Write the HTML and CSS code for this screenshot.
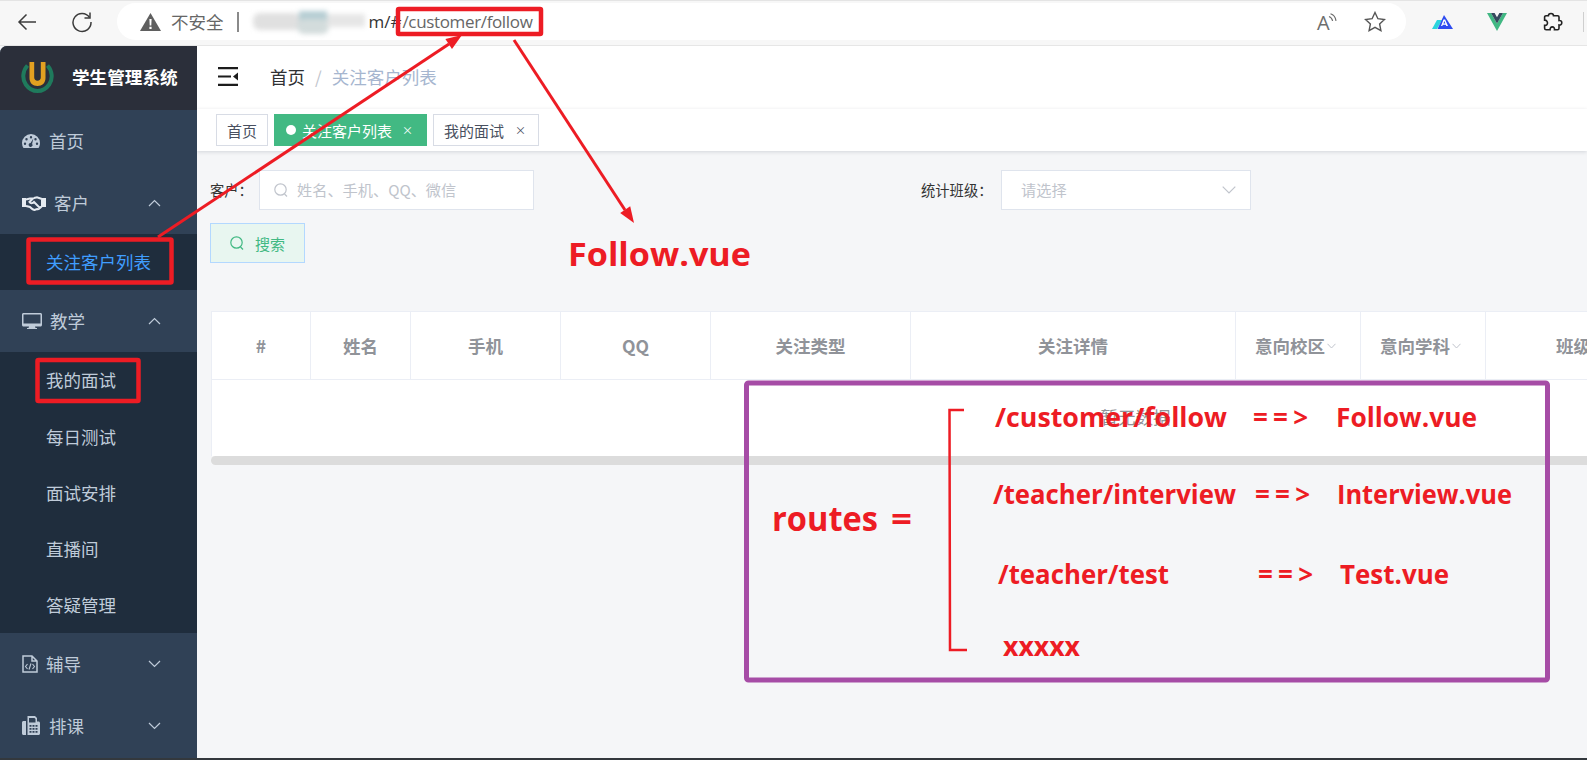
FILE: index.html
```html
<!DOCTYPE html>
<html lang="zh-CN">
<head>
<meta charset="utf-8">
<title>学生管理系统</title>
<link rel="stylesheet" href="styles.css">
</head>
<body>
<div class="page">
  <header class="toolbar">
    <svg class="tb-back" viewBox="0 0 20 18"><path d="M19 9H2M9.5 1.5 2 9l7.5 7.5"/></svg>
    <svg class="tb-reload" viewBox="0 0 22 22"><path d="M18.5 6.5A9 9 0 1 0 20 11"/><path d="M19 1.5v5.5h-5.5"/></svg>
    <div class="pill">
      <svg class="warn" viewBox="0 0 21 18"><path class="warn-tri" d="M10.5 0 21 18H0z"/><path class="warn-mark" d="M9.4 6h2.2l-.3 6.5H9.700zM9.400 13.800h2.200V16H9.400z"/></svg>
      <span class="insecure">不安全</span>
      <span class="pill-sep"></span>
      <svg class="blur" viewBox="0 0 118 28">
        <rect x="2" y="5" width="48" height="17" rx="7" fill="#e0e0e0"/>
        <rect x="48" y="3" width="28" height="11" fill="#b5cdd3"/>
        <rect x="46" y="11" width="32" height="15" rx="7" fill="#d3dcdc"/>
        <rect x="76" y="6" width="38" height="13" fill="#e6e6e6"/>
      </svg>
      <span class="url-dark">m/#</span><span class="url-path">/customer/follow</span>
      <svg class="read" viewBox="0 0 20 18"><text class="read-a" x="0" y="17">A</text><path d="M12 3.500c2 .8 3.200 2.200 3.600 4.500M13.500 .8c3 1 5 3.200 5.500 7"/></svg>
      <svg class="star" viewBox="0 0 22 21"><path d="M11 1.500 13.900 7.700 20.500 8.500 15.600 13 16.900 19.600 11 16.300 5.100 19.600 6.400 13 1.500 8.500 8.100 7.700z"/></svg>
    </div>
    <svg class="ext ext-a" viewBox="0 0 21 14"><path fill="#2bd4dc" d="M0 14 5 5h5l-5 9z"/><path fill="#2d4bf0" d="M12 0 21 14H5.500z"/><path fill="#fff" d="M11.500 4.500h1.600L16 11h-1.700l-.5-1.300h-3l-.5 1.300H9zm-.1 3.900h2l-1-2.400z"/></svg>
    <svg class="ext ext-v" viewBox="0 0 20 18"><path fill="#41b883" d="M0 0h4l6 10.500L16 0h4L10 18z"/><path fill="#35495e" d="M4 0h3.600L10 4.300 12.400 0H16l-6 10.500z"/></svg>
    <svg class="ext ext-p" viewBox="0 0 20 20"><path d="M8 1.500c1.600 0 2.500 1 2.500 2.300h4.200c.8 0 1.300.5 1.300 1.300V8.500c1.500-.2 2.800.6 2.800 2.200s-1.300 2.500-2.800 2.300v3.300c0 1-.6 1.500-1.400 1.500h-3.100c.3-1.800-.7-2.900-2.200-2.900s-2.400 1.100-2.200 2.900H3.200c-1 0-1.600-.6-1.600-1.500v-3c1.800.2 2.900-.8 2.900-2.300S3.400 7.900 1.600 8.100V5.100c0-.8.600-1.300 1.400-1.300h2.400C5.400 2.500 6.400 1.500 8 1.500z"/></svg>
    <span class="tb-divider"></span>
  </header>

  <div class="app">
    <aside class="sidebar">
      <div class="brand">
        <svg class="logo" viewBox="0 0 33 31">
          <path fill="none" stroke="#1f7a5c" stroke-width="4" d="M6.500 3.500C1.500 9 1 17 4.800 22.500 8 27 12 29 16.500 29S25 27 28.200 22.500C32 17 31.500 9 26.500 3.500"/>
          <path fill="#e2a021" d="M8.500 0h4.700v15.500c0 2 1.300 3.200 3.300 3.200s3.300-1.200 3.300-3.200V0h4.700v16c0 5-3.300 8-8 8s-8-3-8-8z"/>
        </svg>
        <span class="brand-name">学生管理系统</span>
      </div>
      <nav class="menu">
        <div class="menu-item">
          <svg class="mi mi-gauge" viewBox="0 0 18 14"><path fill-rule="evenodd" d="M9 0a9 9 0 0 1 9 9c0 2-.6 3.600-1.500 5H1.500A9 9 0 0 1 0 9a9 9 0 0 1 9-9zM9 2a1.200 1.200 0 1 0 0 2.400A1.200 1.200 0 0 0 9 2zM4.500 4a1.200 1.200 0 1 0 0 2.400 1.200 1.200 0 0 0 0-2.400zM13.500 4a1.200 1.200 0 1 0 0 2.400 1.200 1.200 0 0 0 0-2.400zM3 8.500a1.200 1.200 0 1 0 0 2.400 1.200 1.200 0 0 0 0-2.400zM15 8.500a1.200 1.200 0 1 0 0 2.400 1.200 1.200 0 0 0 0-2.400zM11.300 4.500 8.600 9.100a1.900 1.900 0 1 0 1.500.8z"/></svg>
          <span class="mi-text">首页</span>
        </div>
        <div class="menu-item">
          <svg class="mi mi-hand" viewBox="0 0 24 15"><path fill="#e6ebf1" d="M0 2h4v9H0zM20 2h4v9h-4z"/><path fill="none" stroke="#e6ebf1" stroke-width="2" d="M4 3.500 8 2.500h3L7.500 6c1 1.500 3 1.500 4.500 0l6 6c-.8 1-2 1.500-3 1L12.500 14c-1.500 0-3-1.500-4.500-3L4 10M12 2l3-.8 5 1.800v7l-2 2"/></svg>
          <span class="mi-text">客户</span>
          <svg class="chev" viewBox="0 0 13 8"><path d="M1 7 6.500 1.500 12 7"/></svg>
        </div>
        <div class="sub">
          <div class="sub-item active">关注客户列表</div>
        </div>
        <div class="menu-item">
          <svg class="mi mi-mon" viewBox="0 0 20 16"><path fill-rule="evenodd" d="M1.500 0h17c.8 0 1.500.7 1.500 1.500v10.500c0 .8-.7 1.500-1.500 1.500H13l.5 1.500H15v1H5v-1h1.500L7 13.500H1.500C.7 13.500 0 12.800 0 12V1.500C0 .7.700 0 1.500 0zM1.500 1.500V10.500h17V1.500z"/></svg>
          <span class="mi-text">教学</span>
          <svg class="chev" viewBox="0 0 13 8"><path d="M1 7 6.500 1.500 12 7"/></svg>
        </div>
        <div class="sub sub-teach">
          <div class="sub-item">我的面试</div>
          <div class="sub-item">每日测试</div>
          <div class="sub-item">面试安排</div>
          <div class="sub-item">直播间</div>
          <div class="sub-item">答疑管理</div>
        </div>
        <div class="menu-item">
          <svg class="mi mi-file" viewBox="0 0 16 18"><path fill="none" stroke="#bfcbd9" stroke-width="1.500" d="M1 1h9l5 5v11H1zM10 1v5h5"/><path fill="none" stroke="#bfcbd9" stroke-width="1.100" d="M5.500 9 3.500 11.500l2 2.500M10.500 9l2 2.500-2 2.500M9 8.500 7 14.500"/></svg>
          <span class="mi-text">辅导</span>
          <svg class="chev" viewBox="0 0 13 8"><path d="M1 1l5.500 5.500L12 1"/></svg>
        </div>
        <div class="menu-item">
          <svg class="mi mi-fax" viewBox="0 0 18 19"><path fill-rule="evenodd" d="M1.500 5H4v14H1.500C.7 19 0 18.300 0 17.500v-11C0 5.700.7 5 1.500 5zM5.500 0H13l2 2v3.500h1.500c.8 0 1.500.7 1.500 1.500v10.500c0 .8-.7 1.500-1.500 1.500h-11zM7 2v4.500h6.500V3L12.500 2zM7.500 9v1.800h2V9zM10.500 9v1.800h2V9zM13.500 9v1.800h2V9zM7.500 12v1.800h2V12zM10.500 12v1.800h2V12zM13.500 12v1.800h2V12zM7.500 15v1.800h2V15zM10.500 15v1.800h2V15zM13.500 15v1.800h2V15z"/></svg>
          <span class="mi-text">排课</span>
          <svg class="chev" viewBox="0 0 13 8"><path d="M1 1l5.500 5.500L12 1"/></svg>
        </div>
      </nav>
    </aside>

    <main class="main">
      <div class="navbar">
        <svg class="hamburger" viewBox="0 0 20 19"><path d="M0 0h20v2.200H0zM0 8.400h13v2.200H0zM0 16.800h20V19H0zM20 5.500v8l-5-4z"/></svg>
        <span class="bc-home">首页</span>
        <span class="bc-sep">/</span>
        <span class="bc-cur">关注客户列表</span>
      </div>
      <div class="tagsbar">
        <span class="tag tag-home">首页</span>
        <span class="tag tag-on"><i class="dot"></i>关注客户列表<b class="x">×</b></span>
        <span class="tag tag-plain">我的面试<b class="x">×</b></span>
      </div>
      <section class="content">
        <div class="form-row">
          <div class="field field-a">
            <label class="lbl lbl-a">客户：</label>
            <div class="input input-a">
              <svg class="sicon" viewBox="0 0 14 15"><circle cx="6.500" cy="6.500" r="5.700"/><path d="M10.500 11 13 13.500"/></svg>
              <span>姓名、手机、QQ、微信</span>
            </div>
          </div>
          <div class="field">
            <label class="lbl lbl-b">统计班级：</label>
            <div class="input input-b">
              <span>请选择</span>
              <svg class="sel-chev" viewBox="0 0 14 8"><path d="M.700.700 7 7 13.300.700"/></svg>
            </div>
          </div>
        </div>
        <button class="search-btn">
          <svg class="sicon-g" viewBox="0 0 14 15"><circle cx="6.500" cy="6.500" r="5.700"/><path d="M10.500 11 13 13.500"/></svg>
          搜索
        </button>
        <div class="table-wrap">
          <div class="track">
            <div class="thead">
              <div class="th">#</div>
              <div class="th">姓名</div>
              <div class="th">手机</div>
              <div class="th">QQ</div>
              <div class="th">关注类型</div>
              <div class="th">关注详情</div>
              <div class="th th-sort">意向校区<svg class="th-c" viewBox="0 0 9 6"><path d="M.5.800 4.500 5 8.500.8"/></svg></div>
              <div class="th th-sort">意向学科<svg class="th-c" viewBox="0 0 9 6"><path d="M.5.800 4.500 5 8.500.8"/></svg></div>
              <div class="th">班级</div>
              <div class="th"></div>
            </div>
            <div class="tbody">暂无数据</div>
          </div>
          <div class="scrollbar"></div>
        </div>
      </section>
    </main>
  </div>
  <div class="bottom-line"></div>

  <svg class="notes" viewBox="0 0 1587 760">
    <rect class="box-red" x="398" y="9" width="143" height="25" rx="1"/>
    <rect class="box-red" x="28.500" y="239.500" width="143" height="43" rx="1"/>
    <rect class="box-red" x="37.500" y="360" width="101" height="41" rx="1"/>
    <path class="ln" d="M158 237 449 44"/>
    <polygon class="hd" points="462,35 452,48.900 445.400,38.900"/>
    <path class="ln" d="M514 40 625 210"/>
    <polygon class="hd" points="634,223 630.200,206.300 620.200,212.900"/>
    <text class="t-follow" x="568" y="266" textLength="183" lengthAdjust="spacingAndGlyphs">Follow.vue</text>
    <rect class="box-purple" x="746.500" y="383" width="801" height="297" rx="2"/>
    <path class="bracket" d="M964 410H949.500L950 650H967"/>
    <text class="t-routes" x="772" y="531" textLength="106" lengthAdjust="spacingAndGlyphs">routes</text>
    <text class="t-routes" x="891" y="531" textLength="21" lengthAdjust="spacingAndGlyphs">=</text>
    <text class="t-row" x="995" y="427" textLength="232" lengthAdjust="spacingAndGlyphs">/customer/follow</text>
    <text class="t-row" x="1253" y="427" textLength="55" lengthAdjust="spacing">==&gt;</text>
    <text class="t-row" x="1336" y="427" textLength="141" lengthAdjust="spacingAndGlyphs">Follow.vue</text>
    <text class="t-row" x="993" y="504" textLength="243" lengthAdjust="spacingAndGlyphs">/teacher/interview</text>
    <text class="t-row" x="1255" y="504" textLength="55" lengthAdjust="spacing">==&gt;</text>
    <text class="t-row" x="1337" y="504" textLength="175" lengthAdjust="spacingAndGlyphs">Interview.vue</text>
    <text class="t-row" x="998" y="584" textLength="171" lengthAdjust="spacingAndGlyphs">/teacher/test</text>
    <text class="t-row" x="1258" y="584" textLength="55" lengthAdjust="spacing">==&gt;</text>
    <text class="t-row" x="1340" y="584" textLength="109" lengthAdjust="spacingAndGlyphs">Test.vue</text>
    <text class="t-row" x="1003" y="656" textLength="77" lengthAdjust="spacingAndGlyphs">xxxxx</text>
  </svg>
</div>
</body>
</html>
```
FILE: styles.css
```css
* { box-sizing: border-box; }
html, body { margin: 0; padding: 0; height: 100%; overflow: hidden; }
body { font-family: "Noto Sans CJK SC", "Noto Sans", sans-serif; background: #f7f7f7; }
.page { position: relative; width: 1587px; height: 760px; overflow: hidden; }

/* browser toolbar */
.toolbar { height: 46px; display: flex; align-items: flex-start; background: #f7f7f7; border-top: 1px solid #e4e4e4; border-bottom: 1px solid #e6e6e6; position: relative; }
.tb-back { width: 20px; height: 18px; margin: 12px 0 0 17px; fill: none; stroke: #3c3c3c; stroke-width: 1.500; }
.tb-reload { width: 22px; height: 22px; margin: 10px 0 0 34px; fill: none; stroke: #3c3c3c; stroke-width: 1.500; }
.pill { width: 1289px; height: 37px; margin: 2px 0 0 24px; background: #fff; border-radius: 19px; display: flex; align-items: center; padding-left: 23px; }
.warn { width: 21px; height: 18px; flex: none; }
.warn-tri { fill: #5f5f5f; }
.warn-mark { fill: #fff; }
.insecure { margin-left: 10px; font-size: 17.500px; color: #666; line-height: 1; }
.pill-sep { width: 2px; height: 20px; background: #8a8a8a; margin-left: 13px; }
.blur { width: 118px; height: 28px; margin-left: 12px; flex: none; filter: blur(2.500px); }
.url-dark { font-family: "Open Sans", sans-serif; font-size: 17px; color: #333; margin-left: 0; }
.url-path { font-family: "Open Sans", sans-serif; font-size: 17px; color: #666; margin-left: 1px; letter-spacing: -.35px; }
.read { width: 20px; height: 18px; margin-left: auto; fill: none; stroke: #6d6d6d; stroke-width: 1.200; flex: none; overflow: visible; }
.read-a { font-family: "Open Sans", sans-serif; font-size: 20px; fill: #6d6d6d; stroke: none; }
.star { width: 22px; height: 21px; margin: 0 20px 0 27px; fill: none; stroke: #555; stroke-width: 1.400; flex: none; }
.ext { flex: none; }
.ext-a { width: 21px; height: 14px; margin: 14px 0 0 26px; }
.ext-v { width: 20px; height: 18px; margin: 12px 0 0 34px; }
.ext-p { width: 20px; height: 20px; margin: 11px 0 0 36px; fill: none; stroke: #222; stroke-width: 1.600; }
.tb-divider { width: 1px; height: 20px; background: #cfcfcf; margin: 11px 0 0 20px; }

/* app */
.app { display: flex; height: 712px; background: #f5f6f8; }
.sidebar { width: 197px; flex: none; background: #304156; border-radius: 7px 0 0 0; overflow: hidden; }
.brand { height: 64px; background: #2b2f3a; display: flex; align-items: center; padding: 0 0 2px 21px; }
.logo { width: 33px; height: 31px; flex: none; }
.brand-name { margin-left: 18px; color: #fff; font-size: 17.600px; font-weight: 700; line-height: 1; white-space: nowrap; }
.menu-item { height: 62px; display: flex; align-items: center; padding-left: 22px; color: #bfcbd9; position: relative; }
.mi { flex: none; fill: #bfcbd9; }
.mi-gauge { width: 18px; height: 14px; margin-right: 9px; }
.mi-hand { width: 24px; height: 15px; margin-right: 8px; }
.mi-mon { width: 20px; height: 16px; margin-right: 8px; }
.mi-file { width: 16px; height: 18px; margin-right: 8px; fill: none; }
.mi-fax { width: 18px; height: 19px; margin-right: 9px; }
.mi-text { font-size: 17.500px; line-height: 1; }
.chev { width: 13px; height: 8px; position: absolute; left: 148px; top: 27px; fill: none; stroke: #bfcbd9; stroke-width: 1.200; }
.sub { background: #1f2d3d; }
.sub-item { height: 56px; display: flex; align-items: center; padding-left: 46px; color: #bfcbd9; font-size: 17.500px; line-height: 1; }
.sub-teach .sub-item { height: 56.200px; }
.sub-item.active { color: #409eff; }

/* main */
.main { flex: 1; min-width: 0; display: flex; flex-direction: column; overflow: hidden; }
.navbar { height: 63px; flex: none; background: #fff; display: flex; align-items: center; padding: 0 0 2px 21px; box-shadow: 0 1px 3px rgba(0,21,41,.06); position: relative; }
.hamburger { width: 20px; height: 19px; fill: #1c1c1c; flex: none; }
.bc-home { margin-left: 32px; font-size: 17.500px; color: #303133; line-height: 1; }
.bc-sep { margin: 0 10px 0 10px; font-size: 17px; color: #c0c4cc; line-height: 1; }
.bc-cur { font-size: 17.500px; color: #a6b6cf; line-height: 1; }
.tagsbar { height: 42px; flex: none; background: #fff; display: flex; gap: 6px; padding: 5px 0 0 19px; box-shadow: 0 1px 4px rgba(0,21,41,.14); position: relative; }
.tag { height: 32px; display: flex; align-items: center; font-size: 15px; line-height: 1; white-space: nowrap; border: 1px solid #d8dce5; background: #fff; color: #495060; }
.tag-home { width: 52px; justify-content: center; }
.tag-on { width: 153px; background: #42b983; border-color: #42b983; color: #fff; padding-left: 11px; }
.tag-plain { width: 106px; padding-left: 10px; }
.dot { width: 10px; height: 10px; border-radius: 50%; background: #fff; margin-right: 6px; }
.x { font-weight: 400; font-size: 11px; margin-left: 10px; }
.tag-plain .x { margin-left: 11px; }
.content { flex: 1; padding: 19px 0 0 13px; background: #f5f6f8; min-width: 0; }
.form-row { display: flex; height: 40px; }
.field { display: flex; align-items: center; }
.field-a { width: 711px; }
.lbl { font-size: 14.300px; color: #333; line-height: 1; white-space: nowrap; }
.lbl-a { width: 49px; }
.lbl-b { width: 80px; }
.input { height: 40px; background: #fff; border: 1px solid #dfe4ed; display: flex; align-items: center; font-size: 15.200px; color: #c0c4cc; line-height: 1; }
.input-a { width: 275px; padding-left: 14px; }
.input-b { width: 250px; padding-left: 19px; position: relative; }
.sicon { width: 14px; height: 15px; margin-right: 9px; fill: none; stroke: #c0c4cc; stroke-width: 1.200; flex: none; }
.sel-chev { width: 14px; height: 8px; position: absolute; right: 14px; top: 15px; fill: none; stroke: #c0c4cc; stroke-width: 1.200; }
.search-btn { display: flex; align-items: center; width: 95px; height: 40px; margin-top: 13px; padding: 0 0 0 19px; background: #e8f6f0; border: 1px solid #b3d8ff; color: #42b983; font-family: inherit; font-size: 15px; line-height: 1; }
.sicon-g { width: 14px; height: 15px; margin-right: 11px; fill: none; stroke: #42b983; stroke-width: 1.200; flex: none; }
.table-wrap { margin: 48px 0 0 1px; overflow: hidden; }
.track { width: 1848px; background: #fff; border-top: 1px solid #ebeef5; border-left: 1px solid #ebeef5; }
.thead { display: grid; grid-template-columns: 99px 100px 150px 150px 200px 325px 125px 125px 176px 397px; height: 68px; border-bottom: 1px solid #ebeef5; }
.th { display: flex; align-items: center; justify-content: center; border-right: 1px solid #ebeef5; color: #909399; font-size: 17.500px; font-weight: 700; line-height: 1; white-space: nowrap; }
.th-sort { padding-right: 5px; }
.th-c { width: 9px; height: 6px; margin-left: 2px; fill: none; stroke: #c0c4cc; stroke-width: 1; }
.tbody { height: 76px; display: flex; justify-content: center; padding-top: 28px; font-size: 17.500px; line-height: 1; color: #909399; }
.scrollbar { height: 9px; background: #dcdcdc; border-radius: 5px 0 0 5px; }
.bottom-line { height: 2px; background: #33383d; }

/* annotation layer */
.notes { position: absolute; left: 0; top: 0; width: 1587px; height: 760px; pointer-events: none; font-family: "Open Sans", "Noto Sans", sans-serif; font-weight: 700; }
.box-red { fill: none; stroke: #ed1c24; stroke-width: 4.500; }
.ln { fill: none; stroke: #ed1c24; stroke-width: 3; }
.hd { fill: #ed1c24; }
.box-purple { fill: none; stroke: #a64ca6; stroke-width: 5; }
.bracket { fill: none; stroke: #ed1c24; stroke-width: 2.500; }
.t-follow { font-size: 33px; fill: #ed1c24; }
.t-routes { font-size: 34px; fill: #ed1c24; }
.t-row { font-size: 26px; fill: #ed1c24; }
```
